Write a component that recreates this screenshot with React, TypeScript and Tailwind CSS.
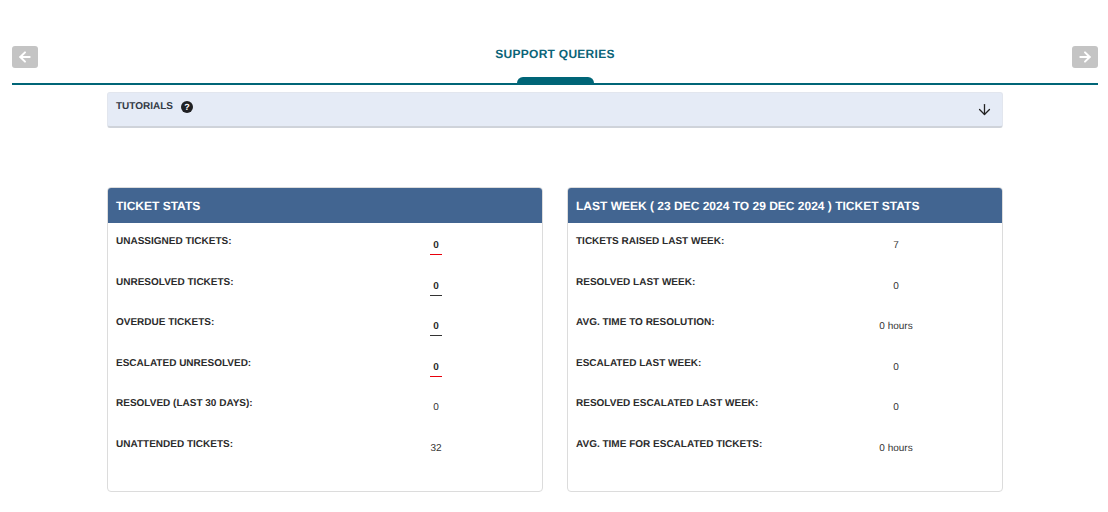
import { ArrowDown, ArrowLeft, ArrowRight } from "lucide-react";

type Stat = { label: string; value: string; line?: "red" | "dark" };

const ticketStats: Stat[] = [
  { label: "UNASSIGNED TICKETS:", value: "0", line: "red" },
  { label: "UNRESOLVED TICKETS:", value: "0", line: "dark" },
  { label: "OVERDUE TICKETS:", value: "0", line: "dark" },
  { label: "ESCALATED UNRESOLVED:", value: "0", line: "red" },
  { label: "RESOLVED (LAST 30 DAYS):", value: "0" },
  { label: "UNATTENDED TICKETS:", value: "32" },
];

const lastWeekStats: Stat[] = [
  { label: "TICKETS RAISED LAST WEEK:", value: "7" },
  { label: "RESOLVED LAST WEEK:", value: "0" },
  { label: "AVG. TIME TO RESOLUTION:", value: "0 hours" },
  { label: "ESCALATED LAST WEEK:", value: "0" },
  { label: "RESOLVED ESCALATED LAST WEEK:", value: "0" },
  { label: "AVG. TIME FOR ESCALATED TICKETS:", value: "0 hours" },
];

const StatsCard = ({ title, stats }: { title: string; stats: Stat[] }) => (
  <div className="w-[436px] h-[305px] rounded-[4px] border border-[#dcdcdc] bg-white overflow-hidden">
    <div className="h-[35px] bg-[#426591] px-2 flex items-center text-white text-[12px] font-bold">
      {title}
    </div>
    <div className="px-2 pt-[12px]">
      {stats.map((stat) => (
        <div key={stat.label} className="flex h-[40.5px]">
          <div className="w-[257px] text-[10px] leading-[14px] font-bold text-[#2b2b2b]">
            {stat.label}
          </div>
          <div className="w-[126px] flex justify-center">
            {stat.line ? (
              <span
                className={`h-[20px] w-[12px] pt-[5px] text-center text-[10px] leading-[12px] font-bold text-[#2b2b2b] border-b ${
                  stat.line === "red" ? "border-[#e8000b]" : "border-[#333333]"
                }`}
              >
                {stat.value}
              </span>
            ) : (
              <span className="pt-[5px] text-[10px] leading-[12px] text-[#333333]">
                {stat.value}
              </span>
            )}
          </div>
        </div>
      ))}
    </div>
  </div>
);

const App = () => {
  return (
    <div className="w-[1108px] h-[512px] bg-white pl-3 pr-[10px] font-['Liberation_Sans',Arial,sans-serif] [text-rendering:geometricPrecision] overflow-hidden">
      <div className="h-[83px] pt-[46px] flex justify-between items-start relative">
        <button className="w-[26px] h-[22px] rounded-[3px] bg-[#c4c4c4] flex items-center justify-center">
          <ArrowLeft size={16} strokeWidth={3} color="#ffffff" />
        </button>
        <div className="text-[12px] leading-[16px] font-bold tracking-[0.27px] text-[#0b6478]">
          SUPPORT QUERIES
        </div>
        <button className="w-[26px] h-[22px] rounded-[3px] bg-[#c4c4c4] flex items-center justify-center">
          <ArrowRight size={16} strokeWidth={3} color="#ffffff" />
        </button>
        <div className="absolute left-[505px] bottom-0 w-[77px] h-[6px] rounded-t-[6px] bg-[#006577]" />
      </div>
      <div className="h-[2px] bg-[#006577]" />

      <div className="mx-[95px] mt-[7px] h-[36px] rounded-[3px] border border-[#e2e6ee] border-b-2 border-b-[#cfd3da] bg-[#e5ebf6] flex justify-between pl-2 pr-[9px]">
        <div className="flex items-center h-[27px] gap-2">
          <span className="text-[10px] font-bold text-[#333a45]">TUTORIALS</span>
          <span className="w-[12px] h-[12px] rounded-full bg-[#1f2023] text-white text-[9px] leading-[12px] font-bold text-center">
            ?
          </span>
        </div>
        <ArrowDown size={17} strokeWidth={1.8} color="#222222" className="mt-[8px]" />
      </div>

      <div className="mx-[95px] mt-[59px] flex justify-between">
        <StatsCard title="TICKET STATS" stats={ticketStats} />
        <StatsCard title="LAST WEEK ( 23 DEC 2024 TO 29 DEC 2024 ) TICKET STATS" stats={lastWeekStats} />
      </div>
    </div>
  );
};

export default App;
